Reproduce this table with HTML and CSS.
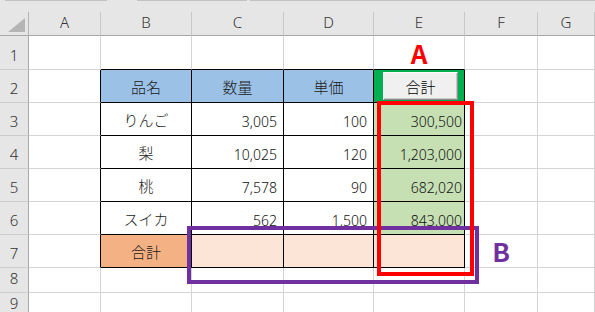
FILE: index.html
```html
<!DOCTYPE html>
<html lang="ja">
<head>
<meta charset="utf-8">
<title>合計</title>
<link rel="stylesheet" href="styles.css">
</head>
<body>
<div class="sheet">
  <div class="grid">
    <div class="topbar"><span class="seg seg1"></span><span class="seg seg2"></span><span class="seg seg3"></span></div>

    <div class="corner"><svg class="tri" width="17" height="14" viewBox="0 0 17 14"><polygon points="0,14 17,14 17,0" fill="#b5b5b5"/></svg></div>
    <div class="colhead">A</div>
    <div class="colhead">B</div>
    <div class="colhead">C</div>
    <div class="colhead">D</div>
    <div class="colhead">E</div>
    <div class="colhead">F</div>
    <div class="colhead">G</div>

    <div class="rowhead">1</div>
    <div class="cell"></div>
    <div class="cell edge-top"></div>
    <div class="cell edge-top"></div>
    <div class="cell edge-top"></div>
    <div class="cell edge-top mark mark-a">A</div>
    <div class="cell"></div>
    <div class="cell"></div>

    <div class="rowhead">2</div>
    <div class="cell edge-left"></div>
    <div class="cell t hdr txt">品名</div>
    <div class="cell t hdr txt">数量</div>
    <div class="cell t hdr txt">単価</div>
    <div class="cell t btncell"><button class="btn" type="button">合計</button></div>
    <div class="cell"></div>
    <div class="cell"></div>

    <div class="rowhead">3</div>
    <div class="cell edge-left"></div>
    <div class="cell t txt">りんご</div>
    <div class="cell t num">3,005</div>
    <div class="cell t num">100</div>
    <div class="cell t num e green">300,500</div>
    <div class="cell"></div>
    <div class="cell"></div>

    <div class="rowhead">4</div>
    <div class="cell edge-left"></div>
    <div class="cell t txt">梨</div>
    <div class="cell t num">10,025</div>
    <div class="cell t num">120</div>
    <div class="cell t num e green">1,203,000</div>
    <div class="cell"></div>
    <div class="cell"></div>

    <div class="rowhead">5</div>
    <div class="cell edge-left"></div>
    <div class="cell t txt">桃</div>
    <div class="cell t num">7,578</div>
    <div class="cell t num">90</div>
    <div class="cell t num e green">682,020</div>
    <div class="cell"></div>
    <div class="cell"></div>

    <div class="rowhead">6</div>
    <div class="cell edge-left"></div>
    <div class="cell t txt">スイカ</div>
    <div class="cell t num">562</div>
    <div class="cell t num">1,500</div>
    <div class="cell t num e green">843,000</div>
    <div class="cell"></div>
    <div class="cell"></div>

    <div class="rowhead">7</div>
    <div class="cell edge-left"></div>
    <div class="cell t total txt">合計</div>
    <div class="cell t peach"></div>
    <div class="cell t peach"></div>
    <div class="cell t peach"></div>
    <div class="cell mark mark-b">B</div>
    <div class="cell"></div>

    <div class="rowhead short">8</div>
    <div class="cell"></div>
    <div class="cell"></div>
    <div class="cell"></div>
    <div class="cell"></div>
    <div class="cell"></div>
    <div class="cell"></div>
    <div class="cell"></div>

    <div class="rowhead short">9</div>
    <div class="cell"></div>
    <div class="cell"></div>
    <div class="cell"></div>
    <div class="cell"></div>
    <div class="cell"></div>
    <div class="cell"></div>
    <div class="cell"></div>
  </div>

  <div class="box box-b"></div>
  <div class="box box-a"></div>
</div>
</body>
</html>
```

FILE: styles.css
```css
* {
  box-sizing: border-box;
}

html, body {
  margin: 0;
  padding: 0;
  background: #ffffff;
}

.sheet {
  position: relative;
  width: 595px;
  height: 312px;
  overflow: hidden;
  background: #ffffff;
  font-family: "Noto Sans", "Noto Sans CJK JP", sans-serif;
  color: #000;
}

.grid {
  display: grid;
  grid-template-columns: 29px 72px 91px 92px 90px 91px 73px 1fr;
  grid-template-rows: 12px 24px 34px 33px 33px 33px 33px 33px 33px 25px 25px;
}

/* strip above the column headers */
.topbar {
  grid-column: 1 / -1;
  display: flex;
  align-items: flex-start;
  background: #e6e6e6;
}

.seg {
  display: block;
  height: 1px;
  background: #c2c2c2;
}

.seg1 { margin-left: 5px; width: 102px; }
.seg2 { margin-left: 30px; width: 110px; }
.seg3 { margin-left: 3px; flex: 1; }

/* headers */
.corner {
  background: #e6e6e6;
  border-right: 1px solid #b4b4b4;
  border-bottom: 1px solid #a8a8a8;
  display: flex;
  justify-content: flex-end;
  align-items: flex-end;
  padding: 0 3px 3px 0;
}

.tri {
  display: block;
}

.colhead {
  background: #e6e6e6;
  border-right: 1px solid #c8c8c8;
  border-bottom: 1px solid #a8a8a8;
  display: flex;
  justify-content: center;
  align-items: center;
  padding-bottom: 3px;
  font-size: 15px;
  font-weight: 300;
  color: #333;
}

.rowhead {
  background: #e6e6e6;
  border-right: 1px solid #a8a8a8;
  border-bottom: 1px solid #cdcdcd;
  display: flex;
  justify-content: center;
  align-items: flex-end;
  padding-bottom: 6px;
  font-size: 15px;
  font-weight: 300;
  line-height: 15px;
  color: #333;
}

/* cells */
.cell {
  border-right: 1px solid #d4d4d4;
  border-bottom: 1px solid #d4d4d4;
  min-width: 0;
}

.edge-left {
  border-right-color: #000;
}

.edge-top {
  border-bottom-color: #000;
}

.t {
  border-right-color: #000;
  border-bottom-color: #000;
}

.txt {
  display: flex;
  justify-content: center;
  align-items: center;
  font-family: "Noto Sans CJK JP", sans-serif;
  font-size: 15px;
  font-weight: 300;
  color: #1a1a1a;
}

.num {
  display: flex;
  justify-content: flex-end;
  align-items: flex-end;
  padding: 0 6px 6px 0;
  font-size: 14px;
  font-weight: 300;
  line-height: 14px;
  color: #111;
}

.num.e {
  padding-right: 2px;
}

.hdr {
  background: #9bc2e6;
}

.green {
  background: #c6e0b4;
}

.total {
  background: #f4b183;
}

.peach {
  background: #fce4d6;
}

/* button cell */
.btncell {
  background: #00b050;
  display: flex;
  padding: 2px 6px 2px 9px;
}

.btn {
  flex: 1;
  margin: 0;
  padding: 0;
  background: #f0f0f0;
  border: 1px solid;
  border-color: #fafafa #8e8e8e #8a8a8a #fafafa;
  box-shadow: inset -1px -1px 0 #c9c9c9;
  font-family: "Noto Sans CJK JP", sans-serif;
  font-size: 15px;
  font-weight: 300;
  color: #000;
  display: flex;
  justify-content: center;
  align-items: center;
}

/* big annotation letters */
.mark {
  display: flex;
  justify-content: center;
  align-items: center;
  font-family: "Noto Sans CJK JP", sans-serif;
  font-weight: 700;
  font-size: 26px;
  line-height: 1;
}

.mark-a {
  color: #ff0000;
}

.mark-b {
  color: #7030a0;
}

/* annotation rectangles drawn over the sheet */
.box {
  position: absolute;
  border-style: solid;
  border-width: 4px;
}

.box-b {
  left: 187px;
  top: 226px;
  width: 292px;
  height: 58px;
  border-color: #7030a0;
}

.box-a {
  left: 377px;
  top: 101px;
  width: 97px;
  height: 175px;
  border-color: #ff0000;
}
```
